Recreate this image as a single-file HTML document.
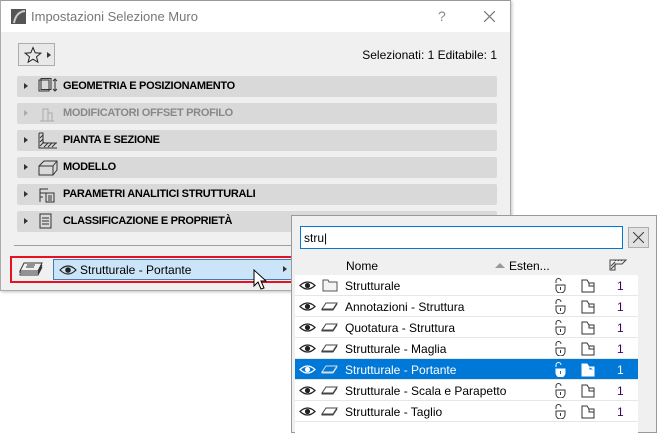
<!DOCTYPE html>
<html><head><meta charset="utf-8"><style>
*{margin:0;padding:0;box-sizing:border-box}
body{width:657px;height:433px;background:#fff;position:relative;overflow:hidden;font-family:"Liberation Sans",sans-serif;font-size:12px;color:#000}
.dlg{position:absolute;left:0;top:0;width:511px;height:291px;background:#f0f0f0;border:1px solid #aaa;border-top:1px solid #999;box-shadow:1px 1px 3px rgba(0,0,0,.25)}
.title{position:absolute;left:0;top:0;width:509px;height:31px;background:#fff}
.title .t{position:absolute;left:30px;top:8px;color:#777;font-size:13px}
.bar{position:absolute;left:16px;width:480px;height:21px;background:#d9d9d9;border-radius:2px}
.bar .ar{position:absolute;left:7px;top:7px;width:0;height:0;border-left:4px solid #333;border-top:3.5px solid transparent;border-bottom:3.5px solid transparent}
.bar .lb{position:absolute;left:46px;top:4px;font-weight:bold;font-size:11px;letter-spacing:-.3px}
.bar svg{position:absolute;left:20px;top:2px}
.pop{position:absolute;left:291px;top:215px;width:366px;height:218px;background:#f0f0f0;border:1px solid #999}
.row{position:absolute;left:3px;width:343px;height:21px;background:#fff;border-bottom:1px solid #e6e6e6}
.row .n{position:absolute;left:50px;top:4px}
.row .num{position:absolute;left:322px;top:4px;color:#3a0066}
.sel{background:#0078d7;color:#fff}
.sel .num{color:#fff}
</style></head><body>
<div class="dlg">
 <div class="title">
  <svg style="position:absolute;left:10px;top:8px" width="15" height="15"><rect width="15" height="15" fill="#555"/><path d="M3 14 Q5 3 14 2" stroke="#ccc" stroke-width="2" fill="none"/></svg>
  <span class="t">Impostazioni Selezione Muro</span>
  <span style="position:absolute;left:437px;top:7px;color:#888;font-size:14px">?</span>
  <svg style="position:absolute;left:483px;top:10px" width="11" height="11"><path d="M0 0L11 11M11 0L0 11" stroke="#777" stroke-width="1.2"/></svg>
 </div>
 <div style="position:absolute;left:17px;top:42px;width:37px;height:23px;border:1px solid #adadad;background:#e8e8e8">
  <svg style="position:absolute;left:5px;top:2px" width="18" height="18"><path d="M9 1.5L11.2 6.8 16.8 7.2 12.5 10.8 13.9 16.2 9 13.2 4.1 16.2 5.5 10.8 1.2 7.2 6.8 6.8Z" fill="none" stroke="#222"/></svg>
  <div style="position:absolute;left:28px;top:8px;border-left:4px solid #333;border-top:3.5px solid transparent;border-bottom:3.5px solid transparent"></div>
 </div>
 <div style="position:absolute;right:13px;top:47px">Selezionati: 1 Editabile: 1</div>

 <div class="bar" style="top:75px"><div class="ar"></div><svg width="22" height="17"><rect x="2" y="2" width="10" height="11" fill="none" stroke="#333"/><rect x="4" y="0.5" width="10" height="11" fill="none" stroke="#333"/><path d="M18 1v12M16 3l2-2 2 2M16 11l2 2 2-2" stroke="#333" fill="none"/></svg><span class="lb">GEOMETRIA E POSIZIONAMENTO</span></div>
 <div class="bar" style="top:102px"><div class="ar" style="border-left-color:#aaa"></div><svg width="22" height="17"><path d="M3 16h14M6 16V4h5v12M11 8h4v8" stroke="#aaa" fill="none"/></svg><span class="lb" style="color:#888">MODIFICATORI OFFSET PROFILO</span></div>
 <div class="bar" style="top:129px"><div class="ar"></div><svg width="22" height="17"><path d="M2 1v15h18M2 1h4v10h14" stroke="#333" fill="none"/><path d="M3 6l3-3M3 10l3-3M3 14l4-4M7 15l4-4M11 15l4-4M15 15l4-4" stroke="#333"/></svg><span class="lb">PIANTA E SEZIONE</span></div>
 <div class="bar" style="top:156px"><div class="ar"></div><svg width="22" height="17"><path d="M2 7h14v9H2zM2 7l5-5h13v9l-4 5M16 7l4-5" stroke="#333" fill="none"/></svg><span class="lb">MODELLO</span></div>
 <div class="bar" style="top:183px"><div class="ar"></div><svg width="22" height="17"><path d="M3 16V3h8M3 7h8M3 11h3" stroke="#333" fill="none"/><rect x="9" y="7" width="8" height="9" fill="none" stroke="#333"/><path d="M11 10h4M11 12h4M11 14h4" stroke="#333"/></svg><span class="lb">PARAMETRI ANALITICI STRUTTURALI</span></div>
 <div class="bar" style="top:210px"><div class="ar"></div><svg width="22" height="17"><rect x="3" y="1" width="11" height="14" fill="none" stroke="#333"/><path d="M5 5h7M5 8h7M5 11h7" stroke="#333"/></svg><span class="lb">CLASSIFICAZIONE E PROPRIETÀ</span></div>

 <div style="position:absolute;left:13px;top:244px;width:484px;height:1px;background:#a0a0a0"></div>
 <div style="position:absolute;left:9px;top:255px;width:284px;height:27px;border:2px solid #e81123"></div>
 <svg style="position:absolute;left:18px;top:260px" width="25" height="16"><path d="M5 2h18l-4 8H1z M1 10v2h18l4-8M1 13l0 1h18l4-8" fill="none" stroke="#333"/><path d="M8 4h8M7 6h8" stroke="#333"/></svg>
 <div style="position:absolute;left:52px;top:258px;width:239px;height:21px;background:#cce4f7;border:1px solid #3c7fb1">
  <svg style="position:absolute;left:5px;top:4px" width="18" height="12"><path d="M1 6Q9 -2 17 6Q9 14 1 6Z" fill="none" stroke="#222" stroke-width="1.2"/><circle cx="9" cy="6" r="2.8" fill="#222"/></svg>
  <span style="position:absolute;left:26px;top:3px">Strutturale - Portante</span>
  <div style="position:absolute;left:229px;top:6px;border-left:4px solid #333;border-top:3.5px solid transparent;border-bottom:3.5px solid transparent"></div>
 </div>
 <svg style="position:absolute;left:252px;top:268px" width="14" height="22"><path d="M1 1v16l4-4 3 7 3-1-3-7h5z" fill="#fff" stroke="#000"/></svg>
</div>

<div class="pop">
 <div style="position:absolute;left:8px;top:10px;width:323px;height:23px;background:#fff;border:1px solid #0078d7"><span style="position:absolute;left:3px;top:4px">stru|</span></div>
 <div style="position:absolute;left:336px;top:11px;width:21px;height:21px;border:1px solid #adadad;background:#e1e1e1"><svg style="position:absolute;left:4px;top:4px" width="11" height="11"><path d="M0 0L11 11M11 0L0 11" stroke="#444" stroke-width="1.1"/></svg></div>
 <div style="position:absolute;left:3px;top:40px;width:343px;height:19px;background:#f0f0f0">
  <span style="position:absolute;left:51px;top:3px">Nome</span>
  <div style="position:absolute;left:200px;top:7px;border-bottom:5px solid #999;border-left:5px solid transparent;border-right:5px solid transparent"></div>
  <span style="position:absolute;left:214px;top:3px">Esten...</span>
  <svg style="position:absolute;left:314px;top:2px" width="18" height="13"><path d="M1 12V2h16l-4 4H6v6z" fill="none" stroke="#444"/><path d="M2 8l4-4M2 11l5-5M6 3l1-1M9 3l1-1M12 3l1-1" stroke="#444"/></svg>
 </div>
 <div style="position:absolute;left:346px;top:59px;width:18px;height:157px;background:#f0f0f0"></div>
 <div id="rows"></div>
 <div style="position:absolute;left:3px;top:206px;width:343px;height:11px;background:#fff"></div>
</div>
<script>
var names=["Strutturale","Annotazioni - Struttura","Quotatura - Struttura","Strutturale - Maglia","Strutturale - Portante","Strutturale - Scala e Parapetto","Strutturale - Taglio"];
var h="";
for(var i=0;i<7;i++){var s=i==4,c=s?"#fff":"#222",c2=s?"#fff":"#333";
var ic=i==0?'<svg style="position:absolute;left:27px;top:4px" width="16" height="13"><path d="M1 1h5l1 2h8v9H1z" fill="#f4f4f4" stroke="#555"/></svg>':'<svg style="position:absolute;left:26px;top:6px" width="17" height="9"><path d="M5 1h11l-4 6H1z M1 7v1h11l4-6" fill="none" stroke="'+(s?'#ddd':'#444')+'"/></svg>';
h+='<div class="row'+(s?' sel':'')+'" style="top:'+(59+i*21)+'px"><svg style="position:absolute;left:4px;top:5px" width="17" height="11"><path d="M1 5.5Q8.5 -1.5 16 5.5Q8.5 12.5 1 5.5Z" fill="none" stroke="'+c+'" stroke-width="1.2"/><circle cx="8.5" cy="5.5" r="2.6" fill="'+c+'"/></svg>'+ic+'<span class="n">'+names[i]+'</span><svg style="position:absolute;left:259px;top:3px" width="13" height="15"><path d="M2 5V3a2.5 2.5 0 0 1 5 0" fill="none" stroke="'+c2+'"/><path d="M2 7h9v4a4.5 4 0 0 1-9 0z" fill="'+(s?'#fff':'none')+'" stroke="'+c2+'"/><path d="M6.5 9v3" stroke="'+(s?'#0078d7':c2)+'"/></svg><svg style="position:absolute;left:286px;top:4px" width="14" height="14"><path d="M1 13V1h5l2 3h5v9zM8 4v3h5" fill="'+(s?'#fff':'none')+'" stroke="'+c2+'"/></svg><span class="num">1</span></div>';}
document.getElementById("rows").innerHTML=h;
</script>
</body></html>
